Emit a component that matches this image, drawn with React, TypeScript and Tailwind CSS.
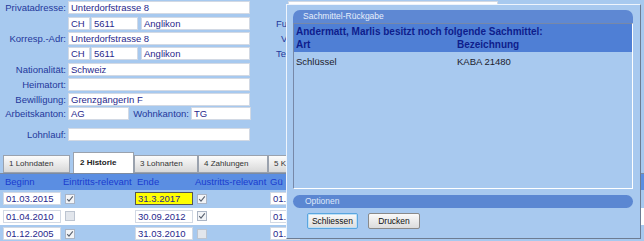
import React from "react";

const Inp = ({ w, children, cls = "" }: { w: string; children?: React.ReactNode; cls?: string }) => (
  <div className={`${w} h-[13px] shrink-0 bg-white border border-[#d2d9e4] pl-[2px] flex items-center text-[#28288c] overflow-hidden whitespace-nowrap ${cls}`}>
    {children}
  </div>
);

const Lbl = ({ w = "w-[66px]", children }: { w?: string; children: React.ReactNode }) => (
  <span className={`${w} shrink-0 text-right text-[#24389c] whitespace-nowrap`}>{children}</span>
);

const Check = ({ on }: { on: boolean }) => (
  <div className={`w-[10px] h-[10px] border ${on ? "border-[#aab4c4] bg-[#f2f4f7]" : "border-[#bcc4d0] bg-[#e2e6ec]"} flex items-center justify-center`}>
    {on && (
      <svg width="8" height="8" viewBox="0 0 8 8">
        <path d="M1.2 4.2 L3 6.2 L6.8 1.4" stroke="#5a6270" strokeWidth="1.1" fill="none" />
      </svg>
    )}
  </div>
);

const Tab = ({ label, w, active = false }: { label: string; w: string; active?: boolean }) => (
  <div
    className={`${w} shrink-0 flex items-center pl-[5px] text-[8px] border border-[#9aa2ae] whitespace-nowrap ${
      active ? "h-[21px] bg-white border-b-0 font-bold text-[#222] pl-[6px]" : "h-[18px] bg-gradient-to-b from-[#fcfcfc] to-[#d8d8d8] text-[#333]"
    }`}
  >
    {label}
  </div>
);

const rows = [
  { bg: "", a: "01.03.2015", c1: true, b: "31.3.2017", yellow: true, c2: true, g: "01." },
  { bg: "bg-white", a: "01.04.2010", c1: false, b: "30.09.2012", yellow: false, c2: true, g: "01." },
  { bg: "", a: "01.12.2005", c1: true, b: "31.03.2010", yellow: false, c2: false, g: "01." },
];

export default function App() {
  return (
    <div className="relative w-[644px] h-[241px] overflow-hidden bg-[#a7c9ef] font-['Liberation_Sans',Arial,sans-serif] text-[9.5px] leading-none">
      {/* top form */}
      <div className="flex">
        <div className="flex flex-col w-[276px] shrink-0">
          <div className="flex items-center mt-[1px] gap-[2px]">
            <Lbl>Privatadresse:</Lbl>
            <Inp w="w-[182px]">Unterdorfstrasse 8</Inp>
          </div>
          <div className="flex items-center mt-[3px] pl-[68px]">
            <Inp w="w-[22px]">CH</Inp>
            <Inp w="w-[47px]" cls="ml-[1px]">5611</Inp>
            <Inp w="w-[109px]" cls="ml-[3px]">Anglikon</Inp>
          </div>
          <div className="flex items-center mt-[2px] gap-[2px]">
            <Lbl>Korresp.-Adr:</Lbl>
            <Inp w="w-[182px]">Unterdorfstrasse 8</Inp>
          </div>
          <div className="flex items-center mt-[2px] pl-[68px]">
            <Inp w="w-[22px]">CH</Inp>
            <Inp w="w-[47px]" cls="ml-[1px]">5611</Inp>
            <Inp w="w-[109px]" cls="ml-[3px]">Anglikon</Inp>
          </div>
          <div className="flex items-center mt-[3px] gap-[2px]">
            <Lbl>Nationalität:</Lbl>
            <Inp w="w-[182px]">Schweiz</Inp>
          </div>
          <div className="flex items-center mt-[2px] gap-[2px]">
            <Lbl>Heimatort:</Lbl>
            <Inp w="w-[182px]"></Inp>
          </div>
          <div className="flex items-center mt-[2px] gap-[2px]">
            <Lbl>Bewilligung:</Lbl>
            <Inp w="w-[182px]">GrenzgängerIn F</Inp>
          </div>
          <div className="flex items-center mt-[1px] gap-[2px]">
            <Lbl>Arbeitskanton:</Lbl>
            <Inp w="w-[61px]">AG</Inp>
            <Lbl w="w-[58px]">Wohnkanton:</Lbl>
            <Inp w="w-[60px]">TG</Inp>
          </div>
          <div className="flex items-center mt-[8px] gap-[2px]">
            <Lbl>Lohnlauf:</Lbl>
            <Inp w="w-[182px]"></Inp>
          </div>
        </div>
        <div className="flex flex-col text-[#24389c] whitespace-nowrap">
          <div className="flex items-center mt-[1px] h-[13px] pl-[12px]">
            <div className="w-[210px] h-[13px] bg-white border border-[#d2d9e4]" />
          </div>
          <div className="mt-[3px] h-[13px] flex items-center">Fu</div>
          <div className="mt-[2px] h-[13px] flex items-center pl-[5px]">V</div>
          <div className="mt-[2px] h-[13px] flex items-center">Tel</div>
        </div>
      </div>

      {/* tabs */}
      <div className="flex items-end mt-[11px] pl-[3px]">
        <Tab label="1 Lohndaten" w="w-[67px]" />
        <div className="w-[3px] shrink-0" />
        <Tab label="2 Historie" w="w-[61px]" active />
        <Tab label="3 Lohnarten" w="w-[64px]" />
        <Tab label="4 Zahlungen" w="w-[70px]" />
        <Tab label="5 K" w="w-[30px]" />
      </div>
      <div className="h-[1px] bg-[#7d8ba0]" />
      {/* table header */}
      <div className="flex items-center h-[16px] bg-[#5b8ee2] text-[#1a3ccf] text-[9.5px] pl-[3px] whitespace-nowrap">
        <div className="w-[58px] shrink-0 pl-[2px]">Beginn</div>
        <div className="w-[74px] shrink-0 pl-[2px]">Eintritts-relevant</div>
        <div className="w-[58px] shrink-0 pl-[2px]">Ende</div>
        <div className="w-[77px] shrink-0 pl-[2px]">Austritts-relevant</div>
        <div className="shrink-0">Gü</div>
      </div>
      {rows.map((r, i) => (
        <div key={i} className={`flex items-center h-[17.5px] pl-[3px] ${r.bg}`}>
          <Inp w="w-[58px]">{r.a}</Inp>
          <div className="w-[74px] shrink-0 pl-[4px]">
            <Check on={r.c1} />
          </div>
          <Inp w="w-[58px]" cls={r.yellow ? "!bg-[#ffff00] !border-[#555]" : ""}>
            {r.b}
          </Inp>
          <div className="w-[77px] shrink-0 pl-[4px]">
            <Check on={r.c2} />
          </div>
          <Inp w="w-[30px]">{r.g}</Inp>
        </div>
      ))}

      {/* modal */}
      <div className="absolute left-[286px] top-[4px] w-[355px] h-[235px] bg-[#a8c9ef] border border-t-[#eef4fc] border-l-[#eef4fc] border-r-[#6d7c92] border-b-[#6d7c92] pl-[6px] pr-[7px] pt-[5px] flex flex-col">
        <div className="h-[13px] shrink-0 rounded-t-[7px] bg-[#5e88d3] text-[#e6eefb] text-[8.5px] pl-[10px] flex items-center">
          Sachmittel-Rückgabe
        </div>
        <div className="h-[166px] shrink-0 border border-t-[#7788a8] border-l-[#7788a8] border-r-white border-b-white flex flex-col">
          <div className="h-[28px] bg-[#4f7fd5] text-[#0e1d8c] font-bold text-[10px] pl-[2px] flex flex-col justify-center gap-[3px]">
            <div>Andermatt, Marlis besitzt noch folgende Sachmittel:</div>
            <div className="flex">
              <div className="w-[161px]">Art</div>
              <div>Bezeichnung</div>
            </div>
          </div>
          <div className="flex pl-[2px] mt-[5px] text-[#1c1c2c]">
            <div className="w-[161px]">Schlüssel</div>
            <div>KABA 21480</div>
          </div>
        </div>
        <div className="mt-[6px] h-[13px] shrink-0 rounded-[7px] bg-[#5b87d2] text-[#dfe8fa] text-[8.5px] pl-[12px] flex items-center">
          Optionen
        </div>
        <div className="flex mt-[5px] pl-[14px] gap-[10px]">
          <button className="w-[51px] h-[16px] text-[8.5px] text-[#111] rounded-[2px] border border-[#5aa6e0] bg-gradient-to-b from-[#fafafa] to-[#dcdcdc] shadow-[inset_0_0_0_1px_#bfe0f6] flex items-center justify-center">
            Schliessen
          </button>
          <button className="w-[52px] h-[16px] text-[8.5px] text-[#111] rounded-[2px] border border-[#8a8a8a] bg-gradient-to-b from-[#fafafa] to-[#dcdcdc] flex items-center justify-center">
            Drucken
          </button>
        </div>
      </div>
    </div>
  );
}
